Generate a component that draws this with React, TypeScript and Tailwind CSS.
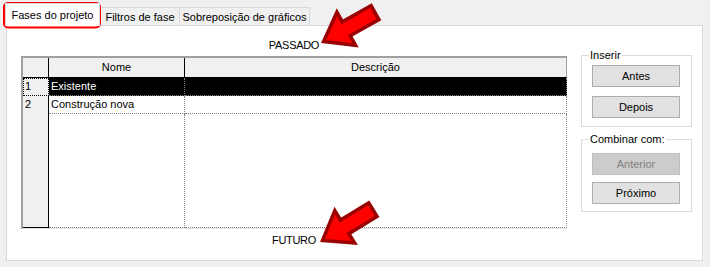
import React from 'react';

const Btn = ({ label, disabled, className }: { label: string; disabled?: boolean; className?: string }) => (
  <div
    className={
      'w-[88px] flex items-center justify-center border ' +
      (disabled ? 'bg-[#cccccc] border-[#bfbfbf] text-[#838383] ' : 'bg-[#e1e1e1] border-[#adadad] text-black ') +
      (className ?? '')
    }
  >
    {label}
  </div>
);

const GroupBox = ({ title, className, children }: { title: string; className: string; children: React.ReactNode }) => (
  <div className={'relative border border-[#dcdcdc] flex flex-col ' + className}>
    <span className="absolute -top-[9px] left-[7px] bg-white px-[1px] leading-[16px]">{title}</span>
    {children}
  </div>
);

const Arrow = ({ x, y, angle }: { x: number; y: number; angle: number }) => (
  <polygon
    points="3,0 29,-19 29,-8 62,-8 62,8 29,8 29,19"
    transform={`translate(${x} ${y}) rotate(${angle})`}
    fill="#ff0000"
    stroke="#990000"
    strokeWidth={3.5}
    strokeLinejoin="miter"
  />
);

export default function App() {
  const cols = 'grid grid-cols-[26px_136px_382px]';
  return (
    <div className="relative w-[710px] h-[267px] overflow-hidden bg-[#f0f0f0] text-[11px] text-black font-['Liberation_Sans',Arial,sans-serif]">
      <div className="pl-[6px] pt-[3px]">
        {/* tabs */}
        <div className="flex items-end h-[22px]">
          <div className="-ml-px -mb-px relative z-10 h-[23px] w-[95px] bg-white border border-b-0 border-[#d9d9d9] flex justify-center pt-[4px] leading-[14px]">
            Fases do projeto
          </div>
          <div className="h-[18px] w-[80px] bg-[#f0f0f0] border border-b-0 border-[#d9d9d9] flex justify-center pt-[2px] leading-[14px]">
            Filtros de fase
          </div>
          <div className="-ml-px h-[18px] w-[131px] bg-[#f0f0f0] border border-b-0 border-[#d9d9d9] flex justify-center pt-[2px] leading-[14px]">
            Sobreposição de gráficos
          </div>
        </div>

        {/* panel */}
        <div className="w-[697px] h-[236px] bg-white border border-[#d9d9d9] flex pl-[14px]">
          <div className="w-[546px] flex flex-col items-center">
            <div className="mt-[11px] h-[16px] leading-[16px] tracking-[-0.3px]">PASSADO</div>
            <div className="mt-[3px] w-[546px] h-[173px] flex flex-col border-t-2 border-l-2 border-b border-t-[#a0a0a0] border-l-[#a0a0a0] border-b-[#e3e3e3]">
              <div className={cols + ' h-[20px] bg-[#f0f0f0] leading-[19px] text-center'}>
                <div className="border-r border-b border-black" />
                <div className="border-r border-b border-black">Nome</div>
                <div className="border-r border-b border-r-[#a0a0a0] border-b-black">Descrição</div>
              </div>
              <div className={cols + ' h-[18px] leading-[17px]'}>
                <div className="bg-[#f0f0f0] border border-dotted border-black pl-[1px] leading-[15px]">1</div>
                <div className="bg-black text-white pl-[2px] border-r border-b border-dotted border-[#808080]">Existente</div>
                <div className="bg-black border-r border-b border-dotted border-[#808080]" />
              </div>
              <div className={cols + ' h-[18px] leading-[17px]'}>
                <div className="bg-[#f0f0f0] border-r border-black pl-[2px]">2</div>
                <div className="pl-[2px] border-r border-b border-dotted border-[#808080]">Construção nova</div>
                <div className="border-r border-b border-dotted border-[#808080]" />
              </div>
              <div className={cols + ' flex-1'}>
                <div className="bg-[#f0f0f0] border-r border-b border-black" />
                <div className="border-r border-b border-dotted border-[#808080]" />
                <div className="border-r border-b border-dotted border-[#808080]" />
              </div>
            </div>
            <div className="mt-[3px] h-[16px] leading-[16px] tracking-[-0.3px]">FUTURO</div>
          </div>

          <div className="ml-[14px] w-[111px] flex flex-col">
            <GroupBox title="Inserir" className="mt-[29px] h-[72px]">
              <Btn label="Antes" className="ml-[10px] mt-[9px] h-[22px]" />
              <Btn label="Depois" className="ml-[10px] mt-[9px] h-[22px]" />
            </GroupBox>
            <GroupBox title="Combinar com:" className="mt-[12px] h-[73px]">
              <Btn label="Anterior" disabled className="ml-[10px] mt-[13px] h-[22px]" />
              <Btn label="Próximo" className="ml-[10px] mt-[7px] h-[22px]" />
            </GroupBox>
          </div>
        </div>
      </div>

      {/* annotations */}
      <svg className="absolute left-0 top-0 pointer-events-none" width="710" height="267" viewBox="0 0 710 267">
        <rect x="4" y="3" width="96" height="24.5" rx="4" fill="none" stroke="#ff0000" strokeWidth="2" />
        <Arrow x={321} y={43} angle={-29.4} />
        <Arrow x={320} y={242} angle={-31.5} />
      </svg>
    </div>
  );
}
